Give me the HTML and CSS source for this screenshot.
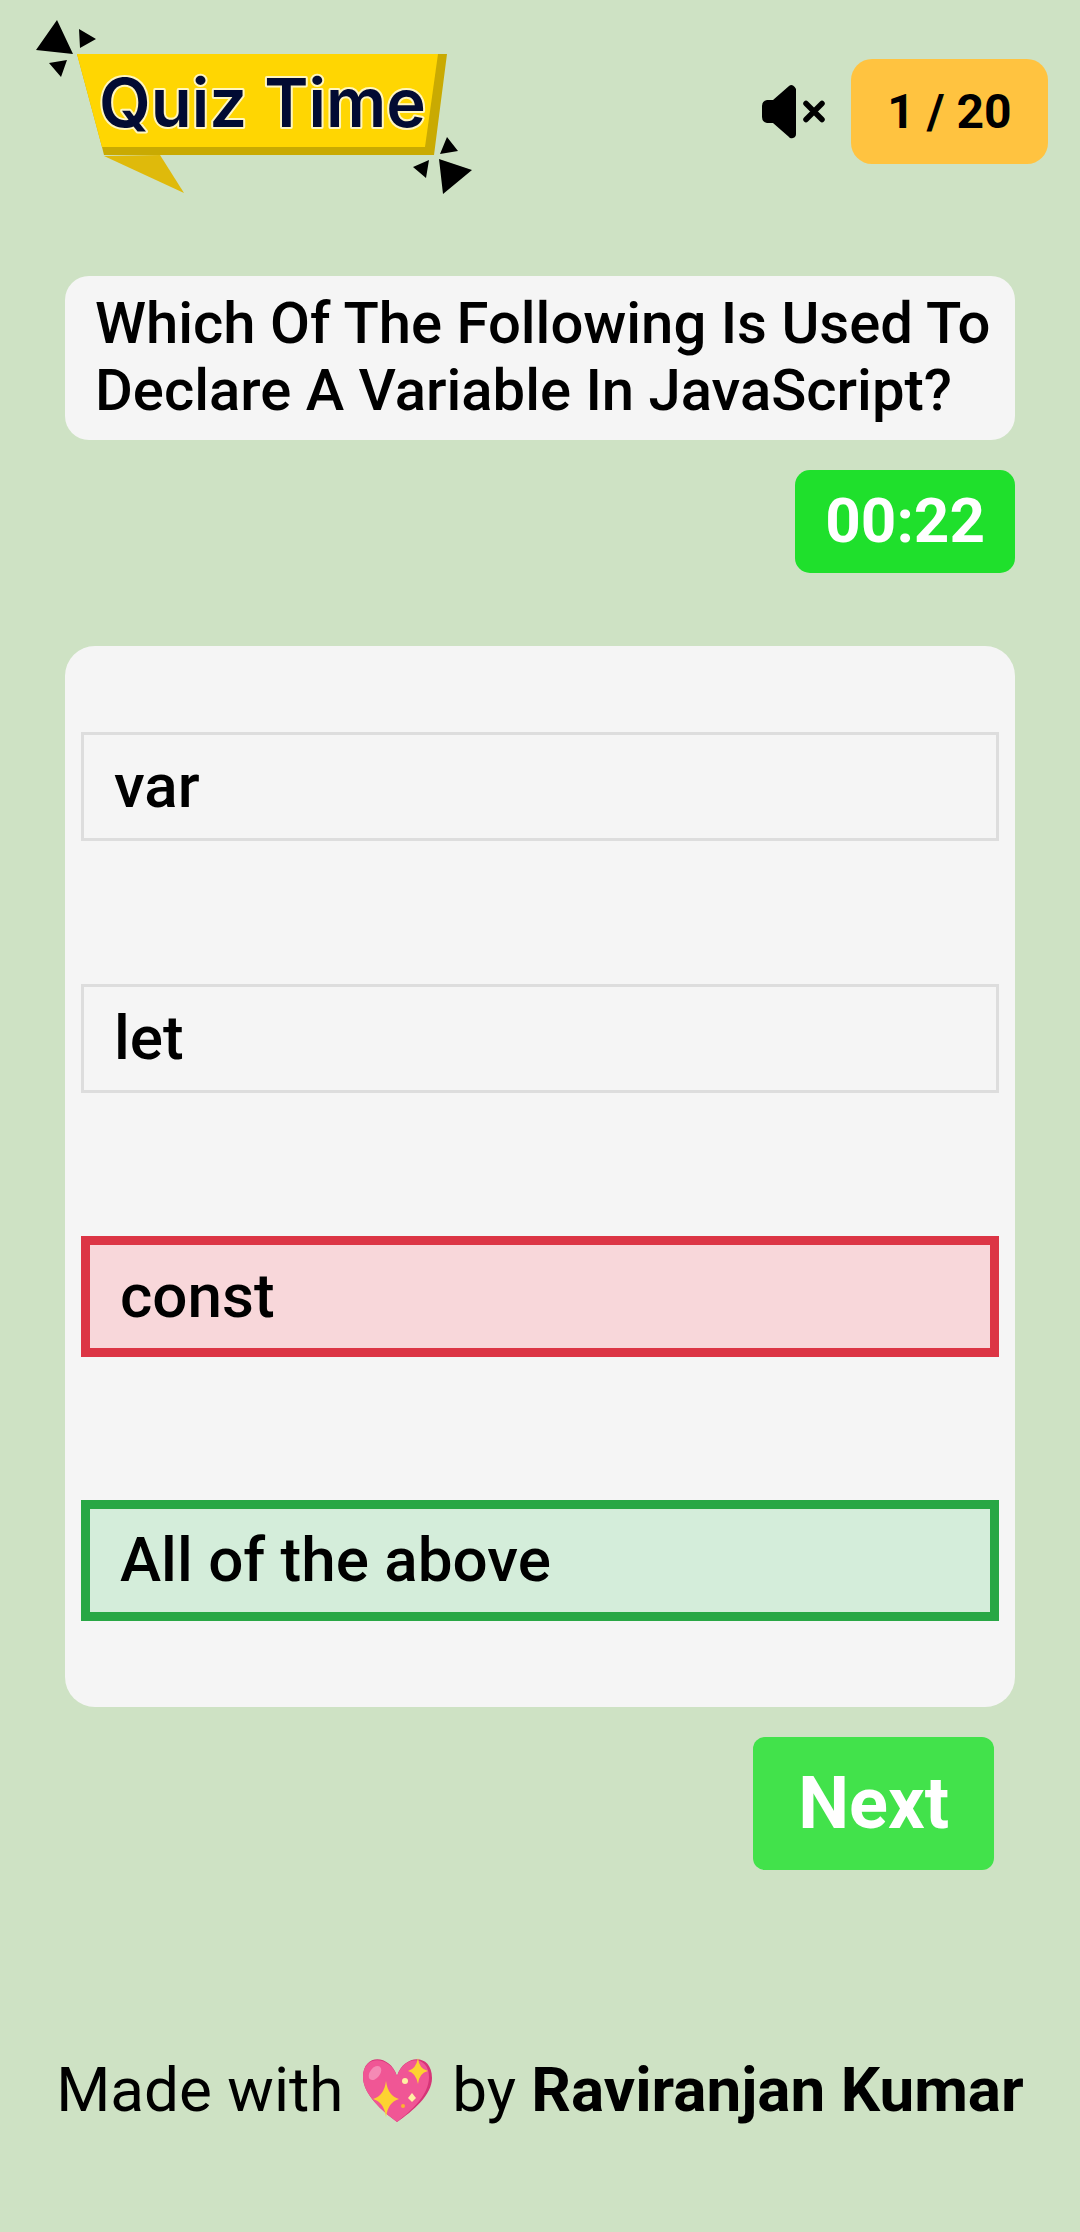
FILE: index.html
```html
<!DOCTYPE html>
<html lang="en">
<head>
<meta charset="utf-8">
<meta name="viewport" content="width=device-width, initial-scale=1">
<title>Quiz Time</title>
<link rel="stylesheet" href="styles.css">
</head>
<body>
<header class="header">
  <svg class="logo" viewBox="32 15 448 192" role="img" aria-label="Quiz Time">
    <path d="M57 20 36 50 73 54ZM79 29 96 39 80 48ZM49 63 67 60 61 77Z" fill="#000"/>
    <path d="M104 156 160 155 184 193Z" fill="#dfba0b"/>
    <path d="M77 54H447L434 155H104L102 147Z" fill="#c9aa02"/>
    <path d="M77 54H438L425 147H102Z" fill="#ffd602"/>
    <path d="M447 137 458 151 440 154ZM413 167 429 160 426 178ZM439 159 472 170 443 194Z" fill="#000"/>
    <text class="logo-text" x="99" y="127">Quiz Time</text>
  </svg>
  <div class="status">
    <button class="mute" type="button" aria-label="Unmute">
      <svg class="mute-icon" viewBox="761 83 66 56" aria-hidden="true">
        <path d="M767 100H773L789 86Q791 84.500 793 85.500T796 89V134Q796 137 793 138T789 137L773 123H767Q762 122 762 117V106Q762 101 767 100Z" fill="#000"/>
        <path d="M806 103.500 822 119.500M822 103.500 806 119.500" stroke="#000" stroke-width="5.500" stroke-linecap="round"/>
      </svg>
    </button>
    <div class="counter">1 / 20</div>
  </div>
</header>
<main class="quiz">
  <h1 class="question">Which Of The Following Is Used To Declare A Variable In JavaScript?</h1>
  <div class="timer" role="timer">00:22</div>
  <div class="options">
    <button class="option" type="button">var</button>
    <button class="option" type="button">let</button>
    <button class="option option-wrong" type="button">const</button>
    <button class="option option-right" type="button">All of the above</button>
  </div>
  <button class="next" type="button">Next</button>
</main>
<footer class="footer">Made with
  <svg class="heart" viewBox="8 10 78 78" role="img" aria-label="love">
    <path d="M46 81C31 70 12 53 12 36 12 12 39 13 46 35 53 13 81 12 81 37 81 54 62 70 46 81Z" fill="#d63477"/>
    <path d="M46 81C31 70 12 53 12 36 12 14 38 14 46 35 54 13 78 15 78 36 78 54 61 69 46 81Z" fill="#f05695"/>
    <ellipse cx="24" cy="32" rx="5" ry="8" transform="rotate(38 24 32)" fill="#f58ab5"/>
    <path d="M35 40Q37 55 48 58 37 61 35 76 33 61 22 58 33 55 35 40ZM67 17Q68 28 77 30 68 32 67 43 65 32 57 30 65 28 67 17Z" fill="#fdd231"/>
    <circle cx="54" cy="40" r="3" fill="#fff0a3"/>
    <path d="M61 52 65 57 61 61 57 57Z" fill="#fff0a3"/>
    <circle cx="52" cy="65" r="2" fill="#fdb22f"/>
  </svg>
  by <strong>Raviranjan Kumar</strong></footer>
</body>
</html>
```
FILE: styles.css
```css
* {
  box-sizing: border-box;
}

body {
  margin: 0;
  background: #cee2c4;
  color: #000;
  font-family: Roboto, "Liberation Sans", sans-serif;
}

button {
  font-family: inherit;
  color: inherit;
  cursor: pointer;
}

.header {
  display: flex;
  align-items: center;
  justify-content: space-between;
  padding: 15px 32px 0;
}

.logo {
  width: 448px;
  height: 192px;
}

.logo-text {
  font-family: Inter, sans-serif;
  font-size: 67px;
  font-weight: 600;
  fill: #020b33;
  stroke: #fff6c0;
  stroke-width: 4px;
  stroke-linejoin: round;
  paint-order: stroke;
}

.status {
  display: flex;
  align-items: center;
  gap: 24px;
}

.mute {
  padding: 0;
  border: 0;
  background: none;
}

.mute-icon {
  display: block;
  width: 66px;
  height: 56px;
}

.counter {
  min-width: 197px;
  padding: 24px 36px;
  border-radius: 21px;
  background: #ffc340;
  font-size: 48px;
  font-weight: 700;
  line-height: 57px;
  text-align: center;
}

.quiz {
  display: flex;
  flex-direction: column;
  margin: 69px 65px 0;
}

.question {
  margin: 0;
  padding: 14px 24px 16px 30px;
  border-radius: 24px;
  background: #f5f5f5;
  font-size: 58px;
  font-weight: 500;
  line-height: 67px;
}

.timer {
  align-self: flex-end;
  margin-top: 30px;
  padding: 14px 30px 16px;
  border-radius: 15px;
  background: #1fe02c;
  color: #fff;
  font-size: 62px;
  font-weight: 700;
  line-height: 73px;
}

.options {
  display: flex;
  flex-direction: column;
  gap: 143px;
  margin-top: 73px;
  padding: 86px 16px;
  border-radius: 30px;
  background: #f5f5f5;
}

.option {
  padding: 14px 30px 16px;
  border: 3px solid #ddd;
  background: none;
  font-size: 62px;
  font-weight: 500;
  line-height: 73px;
  text-align: left;
}

.option-wrong {
  border: 9px solid #dc3545;
  background: #f8d7da;
}

.option-right {
  border: 9px solid #28a745;
  background: #d4edda;
}

.next {
  align-self: flex-end;
  margin: 30px 21px 0;
  padding: 24px 45px;
  border: 0;
  border-radius: 12px;
  background: #42e24b;
  color: #fff;
  font-size: 72px;
  font-weight: 700;
  line-height: 85px;
}

.footer {
  margin-top: 183px;
  font-size: 62px;
  line-height: 73px;
  text-align: center;
}

.heart {
  width: 78px;
  height: 78px;
  margin: -8px 0;
  vertical-align: -10px;
}
```
